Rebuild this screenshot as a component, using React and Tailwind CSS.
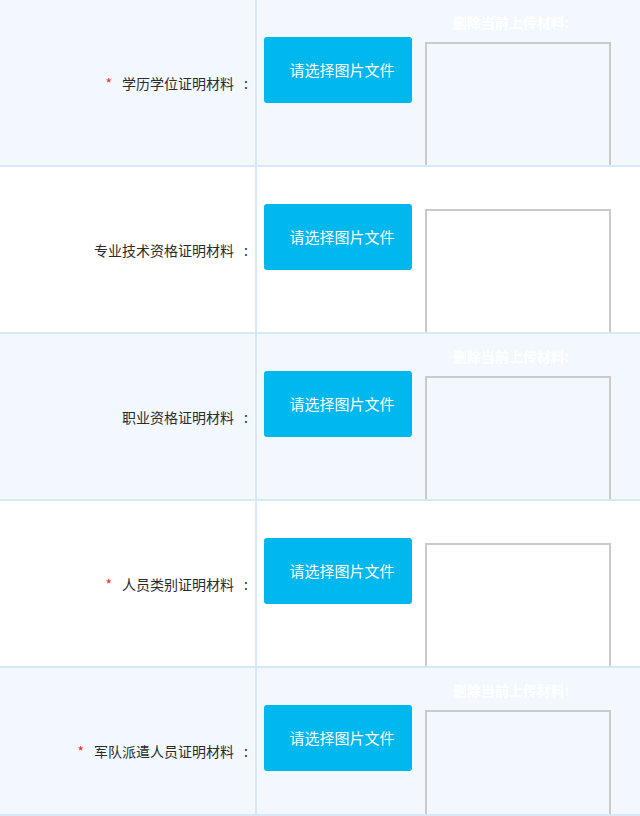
import React from 'react';

const rows = [
  { label: '学历学位证明材料', required: true, shaded: true },
  { label: '专业技术资格证明材料', required: false, shaded: false },
  { label: '职业资格证明材料', required: false, shaded: true },
  { label: '人员类别证明材料', required: true, shaded: false },
  { label: '军队派遣人员证明材料', required: true, shaded: true },
];

const UploadRow = ({ row }) => (
  <div
    className={`flex h-[167px] shrink-0 border-b-2 border-[#d6e9f8] ${
      row.shaded ? 'bg-[#f2f8fe]' : 'bg-white'
    }`}
  >
    {/* label cell */}
    <div className="w-[257px] shrink-0 border-r-2 border-[#d6e9f8] pt-[73px] pr-[3px] flex justify-end items-start">
      <p className="text-[14px] leading-[20px] text-[#2b2b2b]">
        {row.required && <span className="text-[#ff2a2a] mr-[10px]">*</span>}
        {row.label}
        <span className="inline-block w-[18px] pl-[10px]">:</span>
      </p>
    </div>

    {/* upload cell */}
    <div className="flex items-start pl-[7px] overflow-hidden">
      <button className="mt-[37px] w-[148px] h-[66px] rounded-[3px] bg-[#00b7ee] text-white text-[15px] pl-[8px] shrink-0">
        请选择图片文件
      </button>
      <div className="ml-[13px] w-[186px] flex flex-col">
        <p className="mt-[12px] h-[20px] text-[14px] leading-[20px] font-bold text-white text-center pr-[14px]">
          删除当前上传材料:
        </p>
        <div className="mt-[10px] h-[130px] border-2 border-[#cacaca]" />
      </div>
    </div>
  </div>
);

export default function App() {
  return (
    <div
      className="w-[640px] h-[816px] overflow-hidden bg-white flex flex-col"
      style={{ fontFamily: '"Noto Sans CJK SC", "Noto Sans", sans-serif' }}
    >
      <div className="h-[814px] overflow-hidden flex flex-col">
        {rows.map((row, index) => (
          <UploadRow key={index} row={row} />
        ))}
      </div>
      <div className="h-[2px] bg-[#d6e9f8]" />
    </div>
  );
}
